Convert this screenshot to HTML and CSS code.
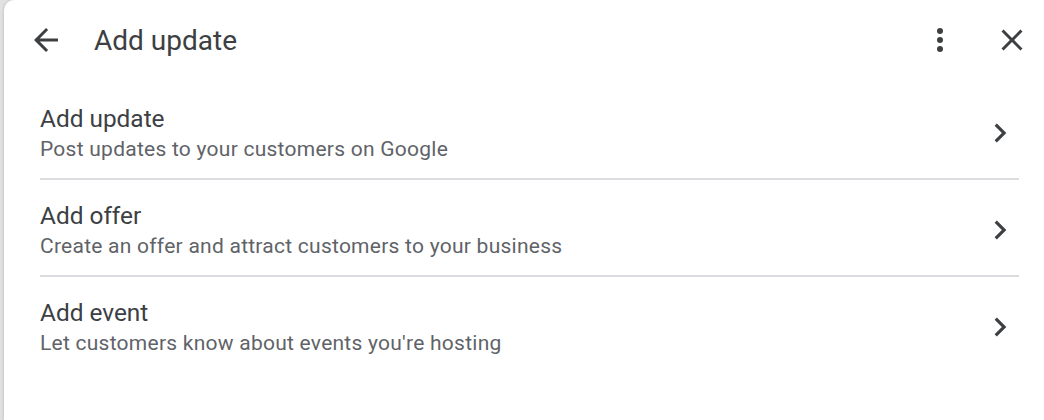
FILE: index.html
```html
<!DOCTYPE html>
<html lang="en">
<head>
<meta charset="utf-8">
<title>Add update</title>
<link rel="stylesheet" href="styles.css">
</head>
<body>
<div class="panel">
  <header class="header">
    <button class="icon-btn back" aria-label="Back">
      <svg viewBox="0 0 24 24" width="36" height="36"><path d="M20 11H7.83l5.59-5.59L12 4l-8 8 8 8 1.41-1.41L7.83 13H20v-2z" fill="currentColor"/></svg>
    </button>
    <h1 class="title">Add update</h1>
    <div class="spacer"></div>
    <button class="icon-btn" aria-label="More">
      <svg viewBox="0 0 24 24" width="36" height="36"><circle cx="12" cy="6" r="2" fill="currentColor"/><circle cx="12" cy="12" r="2" fill="currentColor"/><circle cx="12" cy="18" r="2" fill="currentColor"/></svg>
    </button>
    <button class="icon-btn close" aria-label="Close">
      <svg viewBox="0 0 24 24" width="36" height="36"><path d="M19 6.41L17.59 5 12 10.59 6.41 5 5 6.41 10.59 12 5 17.59 6.41 19 12 13.41 17.59 19 19 17.59 13.41 12z" fill="currentColor"/></svg>
    </button>
  </header>
  <ul class="list">
    <li class="row">
      <div class="text">
        <div class="row-title">Add update</div>
        <div class="row-sub">Post updates to your customers on Google</div>
      </div>
      <span class="chev"><svg viewBox="0 0 24 24" width="38" height="38"><path d="M8.59 16.59L13.17 12 8.59 7.41 10 6l6 6-6 6-1.41-1.41z" fill="currentColor"/></svg></span>
    </li>
    <li class="row">
      <div class="text">
        <div class="row-title">Add offer</div>
        <div class="row-sub">Create an offer and attract customers to your business</div>
      </div>
      <span class="chev"><svg viewBox="0 0 24 24" width="38" height="38"><path d="M8.59 16.59L13.17 12 8.59 7.41 10 6l6 6-6 6-1.41-1.41z" fill="currentColor"/></svg></span>
    </li>
    <li class="row">
      <div class="text">
        <div class="row-title">Add event</div>
        <div class="row-sub">Let customers know about events you're hosting</div>
      </div>
      <span class="chev"><svg viewBox="0 0 24 24" width="38" height="38"><path d="M8.59 16.59L13.17 12 8.59 7.41 10 6l6 6-6 6-1.41-1.41z" fill="currentColor"/></svg></span>
    </li>
  </ul>
</div>
</body>
</html>
```
FILE: styles.css
```css
html, body {
  margin: 0;
  padding: 0;
  height: 100%;
}
body {
  background: #e2e2e2;
  font-family: Roboto, "Liberation Sans", Arial, sans-serif;
  overflow: hidden;
}
.panel {
  margin-left: 4px;
  height: 100%;
  background: #ffffff;
  border-top-left-radius: 10px;
  box-shadow: -1px 0 3px rgba(0,0,0,0.12);
}
.header {
  display: flex;
  align-items: center;
  height: 80px;
  padding: 0 14px 0 24px;
}
.icon-btn {
  width: 36px;
  height: 36px;
  padding: 0;
  border: 0;
  background: none;
  color: #3c4043;
  display: flex;
  align-items: center;
  justify-content: center;
}
.icon-btn svg { display: block; }
.title {
  margin: 0 0 0 30px;
  font-size: 28px;
  font-weight: 400;
  color: #3c4043;
  letter-spacing: 0;
}
.spacer { flex: 1; }
.close { margin-left: 36px; }
.list {
  list-style: none;
  margin: 0;
  padding: 3px 25px 0 36px;
}
.row {
  display: flex;
  align-items: center;
  padding: 20px 0 15px;
  border-bottom: 2px solid #dadce0;
}
.row:last-child { border-bottom: 0; }
.text { flex: 1; }
.row-title {
  font-size: 24.4px;
  line-height: 32px;
  color: #3c4043;
}
.row-sub {
  font-size: 21px;
  line-height: 28px;
  color: #5f6368;
  letter-spacing: 0.25px;
}
.chev {
  color: #3c4043;
  width: 38px;
  height: 38px;
  display: flex;
}
.chev svg { display: block; }
```
